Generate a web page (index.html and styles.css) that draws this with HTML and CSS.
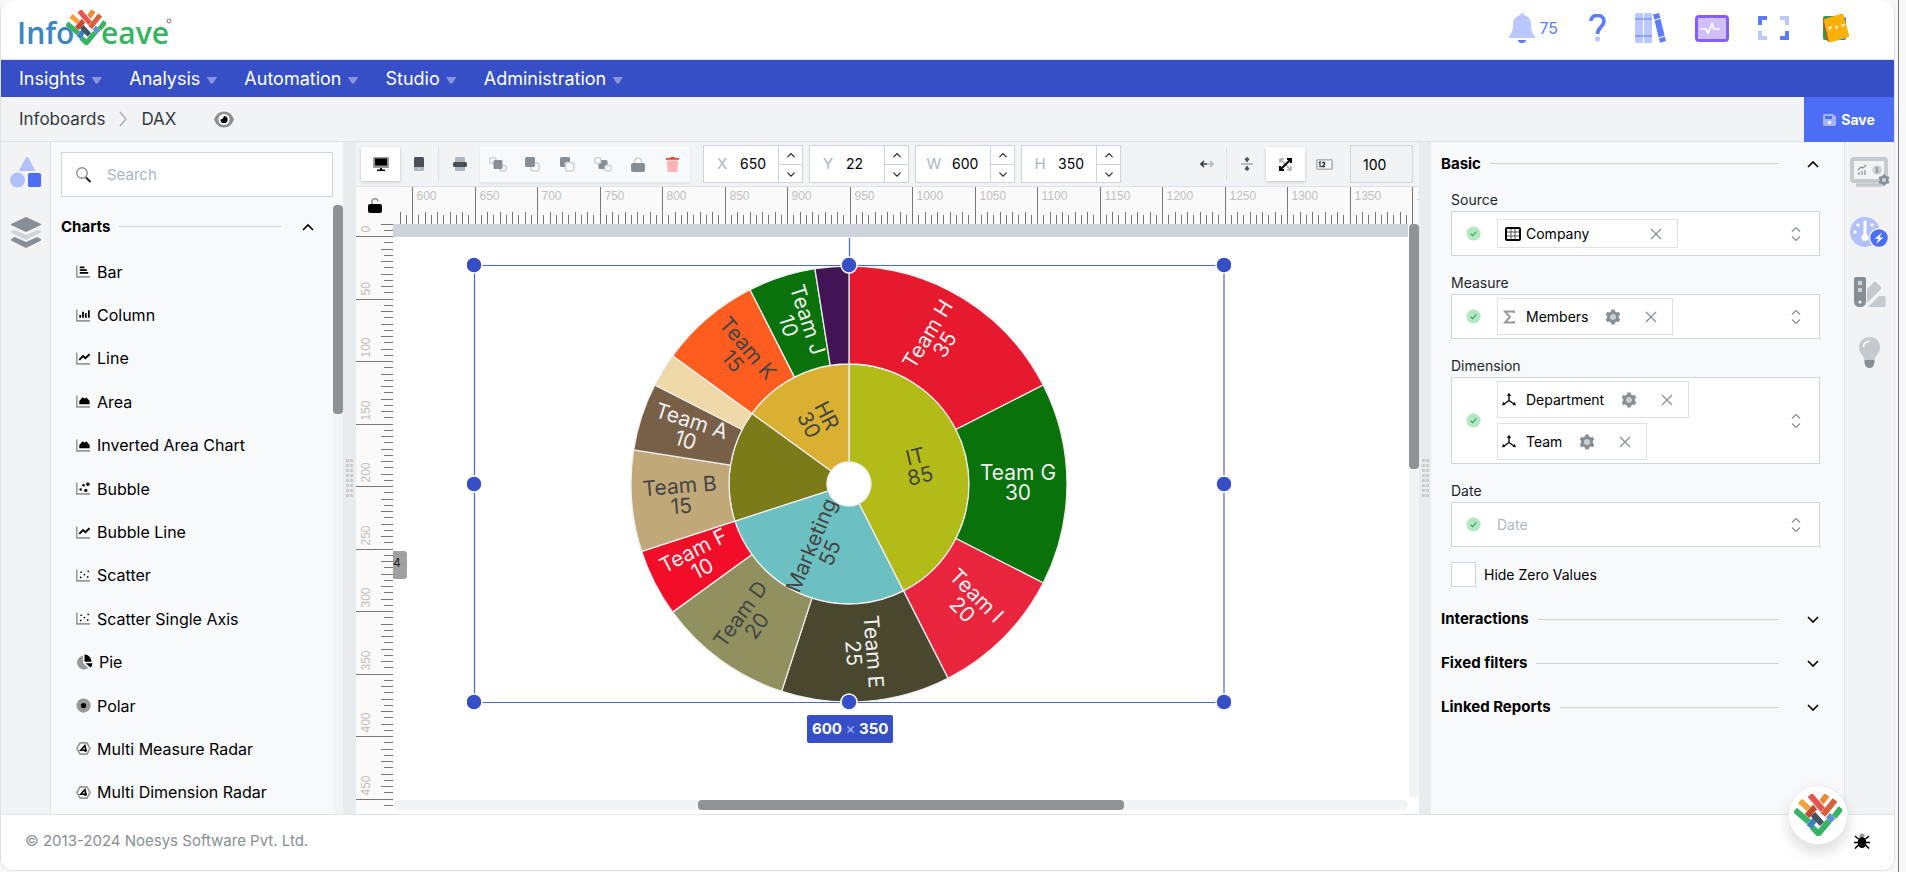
FILE: index.html
```html
<!DOCTYPE html>
<html lang="en">
<head>
<meta charset="utf-8">
<title>Infoweave - DAX</title>
<link rel="stylesheet" href="styles.css">
</head>
<body>
<svg class="defs" aria-hidden="true">
  <symbol id="mark" viewBox="0 0 48 42"><g fill="none" stroke-width="6">
    <path stroke="#f5a13a" d="M6 7l9 8"/><path stroke="#36b464" d="M1 16l14 12"/><path stroke="#36b464" d="M18 33l8 8"/>
    <path stroke="#e98b35" d="M33 1l-6 8"/><path stroke="#c8472f" d="M22 12l-9 10"/><path stroke="#3f7fc0" d="M22 24l-7 9"/>
    <path stroke="#455462" d="M19 20l9 10"/><path stroke="#6290cf" d="M33 20l6 7"/>
    <path stroke="#36b464" d="M47 14l-7 9M35 27L24 40"/>
    <path stroke="#fff" stroke-width="8" d="M41 6L29 21"/><path stroke="#d9603a" d="M41 6L29 21"/>
    <path stroke="#fff" stroke-width="8" d="M17 2l11 13"/><path stroke="#e8554e" d="M16 1l13 15"/></g></symbol>
  <symbol id="up" viewBox="0 0 14 14"><path d="M2 10l5-5 5 5" fill="none" stroke="currentColor" stroke-width="1.6"/></symbol>
  <symbol id="down" viewBox="0 0 14 14"><path d="M2 5l5 5 5-5" fill="none" stroke="currentColor" stroke-width="1.6"/></symbol>
  <symbol id="updown" viewBox="0 0 10 14"><path d="M1 4.500l4-4 4 4M1 9.500l4 4 4-4" fill="none" stroke="currentColor" stroke-width="1.200"/></symbol>
  <symbol id="close" viewBox="0 0 12 12"><path d="M1 1l10 10M11 1L1 11" fill="none" stroke="currentColor" stroke-width="1.200"/></symbol>
  <symbol id="check" viewBox="0 0 16 16"><circle cx="8" cy="8" r="7.500" fill="#b2e9c0"/><path d="M5 8.300l2 2 4-4.300" fill="none" stroke="#3ea763" stroke-width="1.400"/></symbol>
  <symbol id="gear" viewBox="0 0 16 16"><circle cx="8" cy="8" r="4.400" fill="#e3e5e8" stroke="#868e96" stroke-width="3.200"/><path d="M8 .5v3M8 12.500v3M1.500 4.250l2.600 1.500M11.900 10.250l2.600 1.500M1.500 11.750l2.600-1.500M11.900 5.750l2.600-1.500" stroke="#868e96" stroke-width="3.600"/><circle cx="8" cy="8" r="2" fill="#c5cacf"/></symbol>
  <symbol id="axis" viewBox="0 0 16 16"><path d="M8 8.500V3M8 8.500l-5 3.500M8 8.500l5 3.500" stroke="#111" stroke-width="1.500" fill="none"/><path d="M8 .8L5.800 4h4.400zM1 13.300l1.200-3.500 2.300 3.200zM15 13.300l-1.200-3.500-2.300 3.200z" fill="#111"/></symbol>
  <symbol id="frame" viewBox="0 0 16 15"><path d="M.8 1v12.200H15" fill="none" stroke="#999" stroke-width="1.700"/></symbol>
  <symbol id="c-bar" viewBox="0 0 16 15"><use href="#frame"/><path d="M4 3h5M4 6h7.500M4 9h9" stroke="#000" stroke-width="1.900"/></symbol>
  <symbol id="c-col" viewBox="0 0 16 15"><use href="#frame"/><path d="M4.500 10V7M7.500 10V3.500M10.500 10V5M13.700 10V2" stroke="#000" stroke-width="1.900"/></symbol>
  <symbol id="c-line" viewBox="0 0 16 15"><use href="#frame"/><path d="M3.500 9l4-4 2.500 2.200L14.500 3" stroke="#000" stroke-width="2" fill="none"/></symbol>
  <symbol id="c-area" viewBox="0 0 16 15"><use href="#frame"/><path d="M3.500 10.500V7l3.500-4 2.500 1.500L11 3l3.500 4v3.500z" fill="#000"/></symbol>
  <symbol id="c-bub" viewBox="0 0 16 15"><use href="#frame"/><circle cx="8" cy="4" r="1.300"/><circle cx="12.700" cy="3" r="1.900"/><circle cx="5" cy="8.500" r="1.300"/><circle cx="10.500" cy="9.500" r="1.700"/></symbol>
  <symbol id="c-sca" viewBox="0 0 16 15"><use href="#frame"/><circle cx="5.500" cy="4" r=".9"/><circle cx="13" cy="3" r=".9"/><circle cx="9" cy="6.500" r=".9"/><circle cx="5" cy="9.500" r=".9"/><circle cx="12.500" cy="9" r=".9"/></symbol>
  <symbol id="c-pie" viewBox="0 0 17 16"><path d="M7 1.500V9l5.300 5A7 7 0 1 1 7 1.500z" fill="#999"/><path d="M8.500.5A7 7 0 0 1 15.500 7.800h-7zM9.500 9.300h7a7 7 0 0 1-2 4.200z"/></symbol>
  <symbol id="c-pol" viewBox="0 0 16 16"><circle cx="8" cy="8" r="7.600" fill="#999"/><circle cx="8" cy="8" r="2.800"/></symbol>
  <symbol id="c-rad" viewBox="0 0 16 16"><path d="M4.300 2h7.400L15 8l-3.300 6H4.300L1 8z" fill="none" stroke="#999" stroke-width="1.700"/><path d="M9.500 4.800L5 9.800h5.500z" fill="none" stroke="#000" stroke-width="1.600"/><circle cx="10" cy="10.200" r="1.500"/></symbol>
</svg>

<div class="app">
  <header class="top">
    <svg class="logo" width="160" height="58" viewBox="0 0 160 58" role="img" aria-label="Infoweave">
      <text x="0" y="43" fill="#3c86c2">Info</text><text x="84" y="43" fill="#36b464">eave</text>
      <use href="#mark" x="49" y="9" width="40" height="35"/>
      <circle cx="152" cy="20" r="2" fill="none" stroke="#777" stroke-width="1"/>
    </svg>
    <div class="tools">
      <button class="bell" aria-label="Notifications"><svg width="26" height="30" viewBox="0 0 26 30"><path d="M13 0c1.200 0 1.600.8 1.600 2C19 3 22 6 22 11c0 7 1 9 4 12v2H0v-2c3-3 4-5 4-12 0-5 3-8 7.400-9C11.400.8 11.800 0 13 0z" fill="#bac8ff"/><path d="M9 27h8a4 3 0 0 1-8 0z" fill="#5c7cfa"/></svg><span>75</span></button>
      <button aria-label="Help"><svg width="17" height="28" viewBox="0 0 17 28"><path d="M2 7c0-8 13-7 13 0 0 6-6.500 6-6.500 13" fill="none" stroke="#5c7cfa" stroke-width="3.600"/><circle cx="8.500" cy="25" r="2.600" fill="#bac8ff"/></svg></button>
      <button aria-label="Library"><svg width="31" height="30" viewBox="0 0 31 30"><rect width="8" height="30" rx="1.500" fill="#bac8ff"/><rect x="9" width="8" height="30" rx="1.500" fill="#bac8ff"/><path d="M0 6h17M0 23h17" stroke="#5c7cfa"/><path d="M18 1.500l6-1.500 7 28-6 1.800z" fill="#5c7cfa"/><path d="M18.500 7.500l6.500-2M24 25l6-2" stroke="#fff" stroke-width="1.200"/></svg></button>
      <button aria-label="Activity"><svg width="34" height="27" viewBox="0 0 34 27"><rect x="1.500" y="1.500" width="31" height="24" rx="2.500" fill="#d0bfff" stroke="#845ef7" stroke-width="3"/><path d="M5 14h6l2 4 4-9 2 5h6" fill="none" stroke="#fff" stroke-width="1.700"/></svg></button>
      <button aria-label="Full screen"><svg width="31" height="24" viewBox="0 0 31 24"><g fill="none" stroke-width="4"><path stroke="#5c7cfa" d="M2 9V2h7M29 15v7h-7"/><path stroke="#bac8ff" d="M22 2h7v7M9 22H2v-7"/></g></svg></button>
      <button class="user" aria-label="Account"><svg width="28" height="30" viewBox="0 0 28 30"><rect x="1" y="3" width="21" height="24" rx="2" fill="#2f9e44"/><rect x="5" y="4" width="19" height="23" rx="2" fill="#1c7ed6"/><path d="M1 6l4 22 3 1L5 5z" fill="#e03131"/><path d="M1.500 6.500L19 .8q2-.6 2.600 1.400L27 22q.5 2-1.500 2.600L9 29.200q-2 .4-2.500-1.500z" fill="#fab005"/><path d="M6 15l4-1M13 14l3-.5M19 12.500l4-1M8 17.500v-3M14.500 16v-3M21 14v-3" stroke="#fff3bf" stroke-width="1.500"/></svg></button>
    </div>
  </header>

  <nav class="nav">
    <a href="#">Insights<i></i></a><a href="#">Analysis<i></i></a><a href="#">Automation<i></i></a><a href="#">Studio<i></i></a><a href="#">Administration<i></i></a>
  </nav>

  <div class="crumbs">
    <a href="#">Infoboards</a>
    <svg width="8" height="16" viewBox="0 0 8 16"><path d="M1 1l6 7-6 7" fill="none" stroke="#adb5bd" stroke-width="1.600"/></svg>
    <a href="#">DAX</a>
    <button class="eye" aria-label="Preview"><svg width="20" height="17" viewBox="0 0 20 17"><path d="M0 8.500Q3 .5 10 .5t10 8q-3 8-10 8t-10-8z" fill="#8f8f8f"/><circle cx="10" cy="8.500" r="5.600" fill="#fff"/><path d="M10 5a3.600 3.600 0 1 1-3.600 3.600Q9 8.500 10 5z"/></svg></button>
    <button class="save"><svg width="13" height="12" viewBox="0 0 13 12"><path d="M1.500 0H10l3 2.500V10.500a1.500 1.500 0 0 1-1.500 1.500h-10A1.500 1.500 0 0 1 0 10.500v-9A1.500 1.500 0 0 1 1.500 0z" fill="#a5b4fb"/><path d="M2 2h7v3H2z" fill="#4c6ef5"/><circle cx="6.500" cy="8.500" r="1.700" fill="#fff"/></svg>Save</button>
  </div>

  <main class="body">
    <aside class="rail left">
      <button aria-label="Components"><svg width="32" height="31" viewBox="0 0 32 31"><path d="M17 0q1 0 1.500 1L25 13q.4 1-.8 1H10q-1.200 0-.8-1l6.500-12Q16.200 0 17 0z" fill="#b1bffb"/><circle cx="7.500" cy="23" r="7.500" fill="#b1bffb"/><rect x="18" y="16" width="13" height="14" rx="1.500" fill="#4c6ef5"/></svg></button>
      <button aria-label="Layers"><svg width="32" height="31" viewBox="0 0 32 31"><path d="M16 0l15 7v1L16 15 1 8V7z" fill="#868e96"/><path d="M1 14l4-1 11 5 11-5 4 1v1.500L16 23 1 15.500z" fill="#ced4da"/><path d="M1 22l4-2 11 5 11-5 4 2v1.500L16 31 1 23.500z" fill="#868e96"/></svg></button>
    </aside>

    <section class="side">
      <div class="search"><svg width="16" height="16" viewBox="0 0 16 16"><circle cx="6" cy="6" r="5.200" fill="none" stroke="#8f8f8f" stroke-width="1.400"/><path d="M10 10.500l4.500 4.500" stroke="#222" stroke-width="2"/></svg><input type="search" placeholder="Search" aria-label="Search"></div>
      <div class="sidebody">
        <div class="sidecol">
          <button class="head"><b>Charts</b><span class="rule"></span><svg width="14" height="14"><use href="#up"/></svg></button>
          <ul class="charts">
            <li><svg><use href="#c-bar"/></svg>Bar</li>
            <li><svg><use href="#c-col"/></svg>Column</li>
            <li><svg><use href="#c-line"/></svg>Line</li>
            <li><svg><use href="#c-area"/></svg>Area</li>
            <li><svg><use href="#c-area"/></svg>Inverted Area Chart</li>
            <li><svg><use href="#c-bub"/></svg>Bubble</li>
            <li><svg><use href="#c-line"/></svg>Bubble Line</li>
            <li><svg><use href="#c-sca"/></svg>Scatter</li>
            <li><svg><use href="#c-sca"/></svg>Scatter Single Axis</li>
            <li><svg class="wide"><use href="#c-pie"/></svg>Pie</li>
            <li><svg><use href="#c-pol"/></svg>Polar</li>
            <li><svg><use href="#c-rad"/></svg>Multi Measure Radar</li>
            <li><svg><use href="#c-rad"/></svg>Multi Dimension Radar</li>
          </ul>
        </div>
        <div class="track"><div class="thumb"></div></div>
      </div>
    </section>

    <div class="gutter"><span class="grip"></span></div>

    <section class="work">
      <div class="toolbar">
        <button class="tb on" aria-label="Desktop"><svg width="16" height="14" viewBox="0 0 16 14"><rect width="16" height="11" rx="1" fill="#999"/><path d="M2 1.500h12v7H2zM7 11h2v1.500h3V14H4v-1.500h3z"/></svg></button>
        <button class="tb" aria-label="Mobile"><svg width="10" height="14" viewBox="0 0 10 14"><rect width="10" height="14" rx="1.500" fill="#adb5bd"/><path d="M0 1.500Q0 0 1.500 0h7Q10 0 10 1.500V10H0z" fill="#495057"/><circle cx="5" cy="12" r=".8" fill="#fff"/></svg></button>
        <span class="sep"></span>
        <button class="tb print" aria-label="Print"><svg width="14" height="14" viewBox="0 0 14 14"><rect x="2" width="10" height="14" rx="1.500" fill="#adb5bd"/><rect y="5" width="14" height="5" rx="1.500" fill="#495057"/></svg></button>
        <div class="group">
          <button aria-label="Bring to front"><svg width="18" height="15" viewBox="0 0 18 15"><rect x=".8" y=".8" width="6" height="5.500" rx="1" fill="none" stroke="#ced4da" stroke-width="1.500"/><rect x="11" y="8.500" width="6" height="5.500" rx="1" fill="none" stroke="#ced4da" stroke-width="1.500"/><rect x="4.500" y="3" width="9" height="9" rx="1.500" fill="#868e96"/></svg></button>
          <button aria-label="Bring forward"><svg width="15" height="15" viewBox="0 0 15 15"><rect x="6" y="6" width="8" height="8" rx="1.500" fill="none" stroke="#ced4da" stroke-width="1.600"/><rect width="10" height="10" rx="1.500" fill="#868e96"/></svg></button>
          <button aria-label="Send backward"><svg width="15" height="15" viewBox="0 0 15 15"><rect width="10" height="10" rx="1.500" fill="#868e96"/><rect x="5.500" y="5.500" width="8.500" height="8.500" rx="1.500" fill="#f8f9fa" stroke="#ced4da" stroke-width="1.600"/></svg></button>
          <button aria-label="Send to back"><svg width="18" height="15" viewBox="0 0 18 15"><rect x="4.500" y="3" width="9" height="9" rx="1.500" fill="#868e96"/><rect x=".8" y=".8" width="6" height="5.500" rx="1" fill="#f8f9fa" stroke="#ced4da" stroke-width="1.500"/><rect x="11" y="8.500" width="6" height="5.500" rx="1" fill="#f8f9fa" stroke="#ced4da" stroke-width="1.500"/></svg></button>
          <button aria-label="Lock"><svg width="14" height="15" viewBox="0 0 14 15"><path d="M3.500 7V4.500a3.500 3.500 0 0 1 7 0V7" fill="none" stroke="#ced4da" stroke-width="1.700"/><rect y="6" width="14" height="9" rx="2" fill="#868e96"/></svg></button>
          <button aria-label="Delete"><svg width="13" height="15" viewBox="0 0 13 15"><path d="M1 3.500h11L11.300 15H1.700z" fill="#ffb3b3"/><path d="M0 1h4l1-1h3l1 1h4v1.800H0z" fill="#f03e3e"/></svg></button>
        </div>
        <div class="num"><label for="fx">X</label><input id="fx" value="650"><span class="spin"><button aria-label="X up"><svg width="10" height="10"><use href="#up"/></svg></button><button aria-label="X down"><svg width="10" height="10"><use href="#down"/></svg></button></span></div>
        <div class="num"><label for="fy">Y</label><input id="fy" value="22"><span class="spin"><button aria-label="Y up"><svg width="10" height="10"><use href="#up"/></svg></button><button aria-label="Y down"><svg width="10" height="10"><use href="#down"/></svg></button></span></div>
        <div class="num"><label for="fw">W</label><input id="fw" value="600"><span class="spin"><button aria-label="W up"><svg width="10" height="10"><use href="#up"/></svg></button><button aria-label="W down"><svg width="10" height="10"><use href="#down"/></svg></button></span></div>
        <div class="num"><label for="fh">H</label><input id="fh" value="350"><span class="spin"><button aria-label="H up"><svg width="10" height="10"><use href="#up"/></svg></button><button aria-label="H down"><svg width="10" height="10"><use href="#down"/></svg></button></span></div>
        <div class="fit">
          <button class="tb" aria-label="Fit width"><svg width="14" height="8" viewBox="0 0 14 8"><path d="M7 4h6M10 1l3 3-3 3" fill="none" stroke="#adb5bd" stroke-width="1.600"/><path d="M7 4H1M4 1L1 4l3 3" fill="none" stroke="#343a40" stroke-width="1.600"/></svg></button>
          <span class="sep"></span>
          <button class="tb" aria-label="Fit height"><svg width="12" height="14" viewBox="0 0 12 14"><path d="M0 7h12" stroke="#adb5bd" stroke-width="1.800"/><path d="M6 0l2.500 2L6 5.500 3.500 2zM6 14l2.500-2L6 8.500 3.500 12z" fill="#495057"/></svg></button>
          <button class="tb on" aria-label="Fit page"><svg width="13" height="13" viewBox="0 0 13 13"><path d="M1 5V1h4M8 12h4V8M1 1l11 11" fill="none" stroke="#b0b0b0" stroke-width="1.600"/><path d="M12 5V1H8M5 12H1V8M12 1L1 12" fill="none" stroke="#000" stroke-width="1.900"/></svg></button>
          <button class="tb" aria-label="Actual size"><svg width="17" height="11" viewBox="0 0 17 11"><rect x=".8" y=".8" width="15.400" height="9.400" rx="1" fill="none" stroke="#adb5bd" stroke-width="1.600"/><path d="M3 4l1-1v5M6 3.500h2.500v2L6 7.500h3" fill="none" stroke="#343a40" stroke-width="1.300"/></svg></button>
          <input class="zoom" value="100" aria-label="Zoom">
        </div>
      </div>
      <div class="canvas">
        <button class="corner" aria-label="Unlock guides"><svg width="14" height="15" viewBox="0 0 14 15"><path d="M4 7V4a3 3 0 0 1 6-.5" fill="none" stroke="#999" stroke-width="1.600"/><rect y="6" width="14" height="9" rx="2"/></svg></button>
        <svg class="ruler" id="hr" width="100%" height="37"></svg>
        <svg class="ruler" id="vr" width="37" height="100%"></svg>
        <div class="stage">
          <div class="page"></div>
          <span class="coord">4</span>
          <svg class="chart" id="chart" width="764" height="492" viewBox="-7 -35 764 492"></svg>
          <div class="size">600 <i>×</i> 350</div>
        </div>
        <div class="track vt"><div class="thumb"></div></div>
        <div class="track ht"><div class="thumb"></div></div>
      </div>
    </section>

    <div class="gutter thin"><span class="grip"></span></div>

    <section class="props">
      <button class="head"><b>Basic</b><span class="rule"></span><svg width="14" height="14"><use href="#up"/></svg></button>
      <div class="form">
        <span class="lbl">Source</span>
        <div class="combo"><svg width="15" height="15"><use href="#check"/></svg>
          <div class="chips"><div class="chip low"><svg width="16" height="14" viewBox="0 0 16 14"><rect x="1" y="1" width="14" height="12" rx="1" fill="#fff" stroke="#000" stroke-width="2"/><path d="M2 5h12M2 9h12M6 2v10M10 2v10" stroke="#555" stroke-width="1"/></svg><span>Company</span><button class="far" aria-label="Remove Company"><svg width="12" height="12"><use href="#close"/></svg></button></div></div>
          <button aria-label="Open source"><svg width="10" height="14"><use href="#updown"/></svg></button></div>
        <span class="lbl">Measure</span>
        <div class="combo"><svg width="15" height="15"><use href="#check"/></svg>
          <div class="chips"><div class="chip"><svg width="16" height="14" viewBox="0 0 16 14"><path d="M13 3V1.500H4L9 7l-5 5.500h9V11" fill="none" stroke="#999" stroke-width="1.900"/></svg><span>Members</span><button aria-label="Configure Members"><svg width="16" height="16"><use href="#gear"/></svg></button><button aria-label="Remove Members"><svg width="12" height="12"><use href="#close"/></svg></button></div></div>
          <button aria-label="Open measure"><svg width="10" height="14"><use href="#updown"/></svg></button></div>
        <span class="lbl">Dimension</span>
        <div class="combo"><svg width="15" height="15"><use href="#check"/></svg>
          <div class="chips"><div class="chip"><svg width="16" height="16"><use href="#axis"/></svg><span>Department</span><button aria-label="Configure Department"><svg width="16" height="16"><use href="#gear"/></svg></button><button aria-label="Remove Department"><svg width="12" height="12"><use href="#close"/></svg></button></div>
          <div class="chip"><svg width="16" height="16"><use href="#axis"/></svg><span>Team</span><button aria-label="Configure Team"><svg width="16" height="16"><use href="#gear"/></svg></button><button aria-label="Remove Team"><svg width="12" height="12"><use href="#close"/></svg></button></div></div>
          <button aria-label="Open dimension"><svg width="10" height="14"><use href="#updown"/></svg></button></div>
        <label class="lbl" for="date">Date</label>
        <div class="combo"><svg width="15" height="15"><use href="#check"/></svg><input id="date" placeholder="Date"><button aria-label="Open date"><svg width="10" height="14"><use href="#updown"/></svg></button></div>
        <label class="tick"><input type="checkbox">Hide Zero Values</label>
      </div>
      <button class="head"><b>Interactions</b><span class="rule"></span><svg width="14" height="14"><use href="#down"/></svg></button>
      <button class="head"><b>Fixed filters</b><span class="rule"></span><svg width="14" height="14"><use href="#down"/></svg></button>
      <button class="head"><b>Linked Reports</b><span class="rule"></span><svg width="14" height="14"><use href="#down"/></svg></button>
    </section>

    <aside class="rail right">
      <button aria-label="Board settings"><svg width="40" height="31" viewBox="0 0 40 31"><rect x="2" y="2" width="34" height="22" rx="2" fill="#f1f3f5" stroke="#c5cace" stroke-width="4"/><path d="M6 28h26" stroke="#c5cace" stroke-width="3.500"/><path d="M8 13l3-3 2 1 3-3M9 18v-3M12 18v-4M15 18v-5" stroke="#868e96" fill="none" stroke-width="1.200"/><circle cx="27" cy="13" r="4.500" fill="#c5cace"/><path d="M27 10v6" stroke="#868e96" stroke-width="1.500"/><use href="#gear" x="28" y="17" width="12" height="12"/></svg></button>
      <button aria-label="Data"><svg width="40" height="31" viewBox="0 0 40 31"><circle cx="15" cy="15" r="15" fill="#b1bffb"/><path d="M15 3.500v17" stroke="#fff" stroke-width="3"/><circle cx="15" cy="20.500" r="3.500" fill="#fff"/><g fill="#fff"><circle cx="8" cy="8" r="1.700"/><circle cx="22" cy="8" r="1.700"/><circle cx="5" cy="15" r="1.700"/></g><circle cx="29" cy="21" r="9.500" fill="#4c6ef5" stroke="#f1f3f5" stroke-width="1.500"/><path d="M32 15.500l-7.500 6.500h4l-2.500 5 7.500-6.500h-4z" fill="#fff"/></svg></button>
      <button aria-label="Style"><svg width="32" height="31" viewBox="0 0 32 31"><path d="M13 12l7-7q1-1 2 0l5 5q1 1 0 2L13 26z" fill="#c5cace"/><path d="M14 30l11-11h5q1.500 0 1.500 1.500v8q0 1.500-1.500 1.500z" fill="#c5cace"/><path d="M2 0h8q2 0 2 2v22q0 6-6 6t-6-6V2q0-2 2-2z" fill="#868e96"/><path d="M4 4h4v4H4zM4 11h4v4H4z" fill="#ced4da"/><circle cx="6" cy="25" r="1.500" fill="#fff"/></svg></button>
      <button aria-label="Hints"><svg width="21" height="31" viewBox="0 0 21 31"><path d="M10.500 0C17 0 21 5 21 10.500c0 6-5 8-5.500 12.500h-10C5 18.500 0 16.500 0 10.500 0 5 4 0 10.500 0z" fill="#c5cace"/><path d="M4.500 10q0-5 6-6" stroke="#f8f9fa" stroke-width="1.600" fill="none"/><path d="M5.500 23h10v3q-1 5-5 5t-5-5z" fill="#868e96"/></svg></button>
    </aside>
  </main>

  <footer class="foot"><span>© 2013-2024 Noesys Software Pvt. Ltd.</span>
    <button class="fab" aria-label="Assistant"><svg width="48" height="42"><use href="#mark"/></svg></button>
    <button class="bug" aria-label="Report a bug"><svg width="16" height="16" viewBox="0 0 16 16"><circle cx="8" cy="3" r="2.600" fill="#999"/><ellipse cx="8" cy="9.500" rx="4.300" ry="5.500"/><path d="M1 3l3.500 3M15 3l-3.500 3M0 9.500h16M1 15.500l3.500-3.500M15 15.500L11.500 12" stroke="#000" stroke-width="1.600"/></svg></button>
  </footer>
</div>
<script src="app.js"></script>
</body>
</html>
```
FILE: styles.css
```css
* { box-sizing: border-box; }
body { margin: 0; background: #f8f8f9; font: 15px/20px Inter, "Liberation Sans", sans-serif; color: #000; }
body { min-height: 100vh; border-right: 7px solid #f8f8f9; padding-right: 4px; box-shadow: inset -1px 0 #777; }
button, input { font: inherit; color: inherit; border: 0; background: none; padding: 0; margin: 0; outline: 0; }
button { display: flex; align-items: center; justify-content: center; }
input { min-width: 0; }
svg { display: block; flex: none; }
a { color: inherit; text-decoration: none; }
.defs { position: absolute; width: 0; height: 0; }

.app { height: calc(100vh - 1px); display: flex; flex-direction: column; border: 1px solid #dee2e6; border-top: 0; border-radius: 12px; background: #fff; overflow: hidden; }

.top { flex: 0 0 60px; display: flex; align-items: center; justify-content: space-between; padding: 0 44px 0 16px; border-bottom: 1px solid #dee2e6; }
.logo { align-self: flex-start; font: 600 30px "Open Sans", sans-serif; margin-top: 1px; }
.tools { display: flex; align-items: center; gap: 29px; padding-bottom: 3px; }
.bell { gap: 4px; margin-right: 2px; color: #5c7cfa; font-size: 16px; }
.user { margin-left: 4px; }

.nav { flex: 0 0 37px; display: flex; align-items: center; gap: 27px; padding: 0 18px; background: #364fc7; color: #fff; font-size: 18px; }
.nav a { display: flex; align-items: center; gap: 6px; }
.nav i { width: 11px; height: 7px; margin-top: 3px; background: #8695dd; clip-path: polygon(0 0, 100% 0, 60% 100%, 40% 100%); }

.crumbs { flex: 0 0 45px; display: flex; align-items: center; gap: 14px; padding-left: 18px; background: #f1f3f5; border-bottom: 1px solid #dee2e6; font-size: 17px; color: #343a40; }
.eye { margin-left: 24px; }
.save { align-self: stretch; margin: 0 0 -1px auto; width: 90px; gap: 5px; background: #4c6ef5; color: #fff; font-weight: 700; font-size: 14px; }

.body { flex: 1; display: flex; min-height: 0; }
.rail { flex: none; width: 50px; display: flex; flex-direction: column; align-items: center; gap: 29px; padding-top: 15px; background: #f1f3f5; border-right: 1px solid #dee2e6; }
.rail.right { border-right: 0; border-left: 1px solid #dee2e6; }

.side { flex: 0 0 292px; min-width: 0; display: flex; flex-direction: column; background: #f8f9fb; }
.search { flex: none; height: 45px; margin: 10px 10px 8px; display: flex; align-items: center; gap: 15px; padding: 0 14px; background: #fff; border: 1px solid #ced4da; }
.search input { flex: 1; }
::placeholder { color: #adb5bd; opacity: 1; }
.sidebody { flex: 1; display: flex; min-height: 0; }
.sidecol { flex: 1; display: flex; flex-direction: column; padding: 0 0 0 10px; }
.head { width: 100%; height: 43px; gap: 9px; text-align: left; }
.head .rule { flex: 1; height: 1px; background: #ced4da; }
.head svg { margin-left: 11px; }
.sidecol .head { padding-right: 18px; }
.charts { flex: 1; list-style: none; margin: 2px 0 0; padding: 0 0 0 15px; display: flex; flex-direction: column; font-size: 16px; }
.charts li { flex: 1; display: flex; align-items: center; gap: 6px; white-space: nowrap; }
.charts svg { width: 15px; height: 15px; }
.charts svg.wide { width: 17px; height: 16px; }
.track { width: 10px; background: #f1f3f5; border-radius: 5px; }
.thumb { height: 209px; background: #909296; border-radius: 4px; }

.gutter { flex: 0 0 13px; display: flex; align-items: center; justify-content: center; background: #e9ecef; }
.gutter.thin { flex-basis: 12px; }
.grip { width: 7px; height: 38px; background: repeating-linear-gradient(#0000 0 3px, #e9ecef 3px 5px), repeating-linear-gradient(90deg, #ccc 0 3px, #e9ecef 3px 4px); }

.work { flex: 1; min-width: 0; display: flex; flex-direction: column; }
.toolbar { flex: 0 0 45px; display: flex; align-items: center; gap: 6px; padding: 0 6px 0 5px; background: #f1f3f5; border-bottom: 1px solid #dee2e6; font-size: 14px; }
.tb { width: 39px; height: 34px; flex: none; }
.tb.on { background: #fff; box-shadow: 0 1px 3px #0003; }
.toolbar > .tb + .tb { width: 26px; }
.sep { width: 1px; height: 34px; background: #dee2e6; }
.toolbar > .print { margin-right: -2px; width: 29px; }
.group { display: flex; width: 210px; height: 35px; background: #f8f9fb; box-shadow: 0 2px 3px #0001; margin: 0 7px 0 2px; }
.group button { flex: 1; }
.num { display: flex; align-items: stretch; width: 100px; height: 38px; background: #fff; border: 1px solid #ced4da; }
.num label { width: 36px; line-height: 36px; text-align: center; color: #adb5bd; font-size: 15px; }
.num input { flex: 1; width: 38px; }
.spin { width: 24px; border-left: 1px solid #ced4da; display: grid; grid-template-rows: 1fr 1fr; color: #222; }
.spin button + button { border-top: 1px solid #ced4da; }
.fit { flex: 1; display: flex; align-items: center; justify-content: flex-end; }
.zoom { width: 63px; height: 38px; border: 1px solid #ced4da; padding-left: 12px; margin-left: 6px; }

.canvas { flex: 1; display: grid; grid-template: 37px 1fr 16px / 37px 1fr 11px; min-height: 0; background: #fff; overflow: hidden; }
.corner { background: #fafafa; }
.ruler { background: #fafafa; stroke: #777; font: 12px "Liberation Sans", sans-serif; overflow: hidden; }
.ruler text { stroke: none; fill: #c0c0c0; }
#hr { grid-column: 2 / 4; }
#vr { grid-column: 1; grid-row: 2 / 4; height: calc(100% - 4px); }
.stage { position: relative; overflow: hidden; background: #ced3dc; padding-top: 13px; display: flex; }
.page { flex: 1; background: #fff; }
.coord { position: absolute; left: 0; top: 327px; width: 14px; height: 28px; line-height: 24px; background: #a0a0a0; border-radius: 0 3px 3px 0; font-size: 12px; color: #222; }
.chart { position: absolute; left: 74px; top: 6px; font-size: 21px; }
.size { position: absolute; left: 414px; top: 491px; padding: 3px 5px; line-height: 22px; border-radius: 2px; background: #364fc7; color: #fff; font-weight: 700; white-space: nowrap; }
.size i { font-style: normal; font-weight: 400; color: #a5b4fb; }
.vt { width: 10px; margin-left: 1px; }
.vt .thumb { height: 245px; }
.ht { grid-column: 2; width: auto; height: 10px; margin-top: 2px; }
.ht .thumb { width: 42%; height: 10px; margin-left: 30%; }

.props { flex: 0 0 413px; padding: 0 24px 0 10px; background: #f8f9fb; }
.form { padding: 1px 0 0 10px; }
.lbl { display: block; font-size: 14px; line-height: 23px; padding-top: 2px; color: #212529; }
.props .head .rule { margin-right: 7px; }
.form ~ .head { height: 44px; }
.combo { display: flex; align-items: center; min-height: 45px; padding: 3px 18px 3px 14px; margin-bottom: 13px; background: #fff; border: 1px solid #ced4da; font-size: 14px; color: #868e96; }
.chips { flex: 1; display: flex; flex-direction: column; align-items: flex-start; gap: 5px; margin-left: 16px; }
.chip { display: flex; align-items: center; height: 37px; padding: 0 15px 0 3px; border: 1px solid #dee2e6; background: #fff; color: #868e96; }
.chip.low { height: 29px; padding-left: 7px; }
.chip span { margin: 0 17px 0 9px; color: #000; }
.chip.low span { margin-left: 5px; }
.chip button + button { margin-left: 24px; }
.chip .far { margin-left: 44px; }
.combo input { flex: 1; margin-left: 16px; }
.tick { display: flex; align-items: center; gap: 8px; font-size: 14px; padding: 2px 0 10px; }
.tick input { appearance: none; width: 25px; height: 25px; background: #fff; border: 1px solid #ced4da; }

.foot { flex: 0 0 56px; display: flex; align-items: center; padding: 0 24px 4px 24px; border-top: 1px solid #dee2e6; color: #868e96; }
.fab { width: 60px; height: 60px; margin: -52px 6px 0 auto; border-radius: 50%; background: #fff; border: 1px solid #e9ecef; box-shadow: 0 8px 14px #0002; z-index: 1; }
```
FILE: app.js
```js
const scale = 1.25;

function drawRuler(id, from, to, origin, vertical) {
  let out = '';
  for (let v = from; v <= to; v += 5) {
    const p = Math.round(origin + v * scale) + 0.5;
    const start = v % 50 === 0 ? 0 : v % 10 === 0 ? 25 : 28;
    out += vertical ? `<path d="M${start} ${p}H37"/>` : `<path d="M${p} ${start}V37"/>`;
    if (start === 0) {
      out += vertical
        ? `<text transform="translate(14 ${p - 4}) rotate(-90)">${v}</text>`
        : `<text x="${p + 4}" y="13">${v}</text>`;
    }
  }
  document.getElementById(id).innerHTML = out;
}
drawRuler('hr', 590, 1400, -731, false);
drawRuler('vr', -10, 465, 12, true);

const dark = '#444', light = '#eee';
const data = [
  { name: 'IT', value: 85, color: '#b3bb19', text: dark, teams: [
    ['Team H', 35, '#e6192f', light], ['Team G', 30, '#0a720a', light], ['Team I', 20, '#e9253e', light]] },
  { name: 'Marketing', value: 55, color: '#6dc0c1', text: dark, teams: [
    ['Team E', 25, '#49482f', light], ['Team D', 20, '#919160', dark], ['Team F', 10, '#f20d28', light]] },
  { name: '', value: 30, color: '#7b7b18', text: dark, teams: [
    ['Team B', 15, '#c0a878', dark], ['Team A', 10, '#785f47', light], ['', 5, '#efd9a8', dark]] },
  { name: 'HR', value: 30, color: '#d9b032', text: dark, teams: [
    ['Team K', 15, '#ff5c1f', dark], ['Team J', 10, '#0a720a', light], ['', 5, '#421456', light]] },
];
const cx = 375, cy = 219, unit = 360 / 200;

function point(r, deg) {
  const a = deg * Math.PI / 180;
  return [cx + r * Math.sin(a), cy - r * Math.cos(a)].map(n => n.toFixed(2)).join(' ');
}
function sector(r0, r1, a, b, color) {
  const big = b - a > 180 ? 1 : 0;
  return `<path d="M${point(r0, a)}L${point(r1, a)}A${r1} ${r1} 0 ${big} 1 ${point(r1, b)}L${point(r0, b)}A${r0} ${r0} 0 ${big} 0 ${point(r0, a)}z" fill="${color}" stroke="#eee" stroke-width="1.3"/>`;
}
function label(r, mid, name, value, color) {
  if (!name) return '';
  const turn = mid > 180 ? mid - 270 : mid - 90;
  return `<g transform="translate(${point(r, mid)}) rotate(${turn})" fill="${color}" text-anchor="middle"><text y="-4">${name}</text><text y="16">${value}</text></g>`;
}
let shapes = '', labels = '', at = 0;
for (const d of data) {
  const end = at + d.value * unit;
  shapes += sector(22, 120, at, end, d.color);
  labels += label(71, (at + end) / 2, d.name, d.value, d.text);
  let a = at;
  for (const [name, value, color, text] of d.teams) {
    const b = a + value * unit;
    shapes += sector(120, 218, a, b, color);
    labels += label(169, (a + b) / 2, name, value, text);
    a = b;
  }
  at = end;
}
let frame = '<path d="M375.5 -27V0M0.500 0.500H750V437.500H0.500z" fill="none" stroke="#4c66d8" stroke-width="1.200"/>';
for (const [x, y] of [[0, 0], [375, 0], [750, 0], [0, 219], [750, 219], [0, 437], [375, 437], [750, 437]]) {
  frame += `<circle cx="${x}" cy="${y}" r="8" fill="#364fc7" stroke="#fff" stroke-width="1.500"/>`;
}
document.getElementById('chart').innerHTML = shapes + labels + frame;
```
